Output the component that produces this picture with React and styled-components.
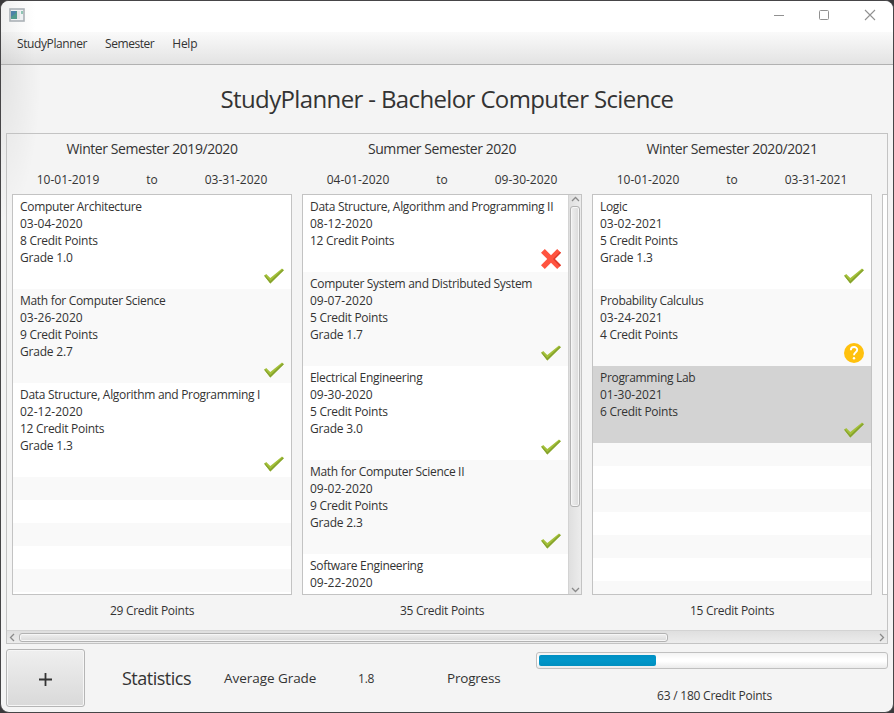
import React from "react";
import styled, { createGlobalStyle, css } from "styled-components";

const Global = createGlobalStyle`
  * { box-sizing: border-box; }
  html, body { margin: 0; padding: 0; }
  body { background: #3a393b; overflow: hidden; }
`;

const Window = styled.div`
  width: 894px;
  height: 713px;
  display: flex;
  flex-direction: column;
  background: radial-gradient(ellipse 40px 150px at 0 70px, rgba(0,0,0,.07), rgba(0,0,0,0)), #f4f4f4;
  border: 1px solid #464547;
  border-radius: 9px;
  overflow: hidden;
  font-family: "Open Sans", "Noto Sans", sans-serif;
  font-size: 12px;
  line-height: 17px;
  color: #333;
  white-space: nowrap;
`;

const TitleBar = styled.header`
  flex: none;
  height: 31px;
  display: flex;
  align-items: center;
  padding: 0 17px 3px 8px;
  background: linear-gradient(90deg, #f0f0f0, #fff 34px);
`;

const Controls = styled.div`
  margin-left: auto;
  display: flex;
  gap: 34px;
`;

const MenuBar = styled.nav`
  flex: none;
  height: 33px;
  display: flex;
  gap: 18px;
  padding: 3px 16px;
  background: linear-gradient(90deg, rgba(0,0,0,.06), rgba(0,0,0,0) 34px), linear-gradient(#fafafa, #e3e3e3);
  border-bottom: 1px solid #b1b1b1;
`;

const Text = styled.span`
  display: block;
  flex: none;
  letter-spacing: ${(p) => p.$ls || 0}px;
`;

const Title = styled.h1`
  flex: none;
  margin: 0;
  height: 68px;
  line-height: 68px;
  text-align: center;
  font-size: 24px;
  font-weight: 400;
  letter-spacing: -0.63px;
`;

const ScrollPane = styled.main`
  flex: none;
  width: 882px;
  height: 511px;
  margin-left: 5px;
  border: 1px solid #c3c3c3;
  display: flex;
  flex-direction: column;
`;

const Columns = styled.div`
  height: 496px;
  display: flex;
  gap: 10px;
  padding-left: 5px;
  overflow: hidden;
`;

const Column = styled.section`
  flex: none;
  width: 280px;
  display: flex;
  flex-direction: column;
`;

const ColumnTitle = styled.h2`
  margin: 0;
  height: 31px;
  line-height: 30px;
  font-size: 14px;
  font-weight: 400;
  text-align: center;
  letter-spacing: -0.43px;
`;

const Dates = styled.div`
  height: 29px;
  line-height: 29px;
  display: grid;
  grid-template-columns: 112px 56px 112px;
  text-align: center;
`;

const List = styled.div`
  height: 401px;
  display: flex;
  border: 1px solid #c3c3c3;
  background: #fff;
`;

const Rows = styled.div`
  flex: 1;
  overflow: hidden;
`;

const Row = styled.article`
  display: flex;
  flex-direction: column;
  padding: 3px 7px;
  background: ${(p) => (p.$selected ? "#d3d3d3" : p.$odd ? "#f9f9f9" : "#fff")};
`;

const EmptyRow = styled.div`
  height: 23px;
  background: ${(p) => (p.$odd ? "#f9f9f9" : "#fff")};
`;

const Status = styled.div`
  height: 20px;
  display: flex;
  justify-content: flex-end;
`;

const Total = styled.footer`
  height: 32px;
  line-height: 31px;
  text-align: center;
  letter-spacing: -0.28px;
`;

const VBar = styled.div`
  flex: none;
  width: 13px;
  display: flex;
  flex-direction: column;
  align-items: center;
  justify-content: space-between;
  padding: 0;
  border-left: 1px solid #d3d3d3;
  background: linear-gradient(90deg, #dfdfdf, #ececec);
`;

const HBar = styled.div`
  height: 13px;
  display: flex;
  align-items: center;
  justify-content: space-between;
  padding: 0 1px;
  border-top: 1px solid #d3d3d3;
  background: linear-gradient(#dfdfdf, #ececec);
`;

const Thumb = styled.div`
  border: 1px solid #b2b2b2;
  border-radius: 3px;
  box-shadow: inset 0 0 0 1px #f6f6f6;
  ${(p) =>
    p.$vertical
      ? css`
          width: 10px;
          height: 301px;
          margin: 2px 0 auto;
          background: linear-gradient(90deg, #efefef, #dadada);
        `
      : css`
          width: 649px;
          height: 9px;
          margin: 0 auto 0 2px;
          background: linear-gradient(#efefef, #dadada);
        `}
`;

const Bottom = styled.footer`
  flex: none;
  display: grid;
  grid-template-columns: 79px 37px 102px 134px 89px 89px 352px;
  margin: 5px 0 0 5px;
  height: 58px;
  align-items: center;
`;

const AddButton = styled.button`
  height: 58px;
  padding: 3px 0 0;
  border: 1px solid #b5b5b5;
  border-radius: 3px;
  box-shadow: inset 0 0 0 1px #f6f6f6;
  background: linear-gradient(#efefef, #d9d9d9);
  display: grid;
  place-items: center;
`;

const Heading = styled(Text)`
  font-size: 18px;
  line-height: 24px;
`;

const Stat = styled(Text)`
  font-size: 13.5px;
`;

const Progress = styled.div`
  align-self: stretch;
  display: flex;
  flex-direction: column;
  align-items: center;
  padding-top: 3px;
  gap: 18px;
`;

const ProgressLabel = styled(Text)`
  padding-left: 5px;
`;

const Track = styled.div`
  width: 352px;
  height: 17px;
  padding: 2px;
  border: 1px solid #c0c0c0;
  border-radius: 3px;
  background: linear-gradient(#f3f3f3, #fff 40%, #fff 55%, #ebebeb);
`;

const Fill = styled.div`
  height: 11px;
  border-radius: 2px;
  background: linear-gradient(#0090c4, #0096c9 50%, #008fbf);
`;

const AppIcon = () => (
  <svg width="16" height="14" viewBox="0 0 16 14">
    <rect x="1" y="1" width="14" height="12" fill="#eef1f3" stroke="#aab1b6" strokeWidth="1.6" />
    <rect x="2" y="3" width="6" height="8" fill="#4f9a8c" />
    <path d="M2 3h5v2l-5 4z" fill="#4a82a8" />
    <rect x="8" y="3" width="3" height="8" fill="#dfe2e4" />
    <rect x="12" y="3" width="2" height="3" fill="#8fc5b4" />
  </svg>
);

const Minimize = () => (
  <svg width="12" height="12" viewBox="0 0 12 12"><path d="M2 6.5h10" stroke="#919191" /></svg>
);
const Maximize = () => (
  <svg width="12" height="12" viewBox="0 0 12 12" fill="none"><rect x="1.5" y="1.5" width="9" height="9" rx="1" stroke="#919191" /></svg>
);
const Close = () => (
  <svg width="12" height="12" viewBox="0 0 12 12"><path d="M1 1l10 10M11 1L1 11" stroke="#919191" strokeWidth="1.1" /></svg>
);

const Check = () => (
  <svg width="20" height="20" viewBox="0 0 20 20">
    <path d="M.2 9.8L2.2 8L6.3 12L18 2.4L19.8 4.2L6.3 17.4z" fill="#a4c139" />
    <path d="M6.3 17.4L19.8 4.2L18.8 3.3L6.3 15L.9 9.2L.2 9.8z" fill="#86a32e" />
  </svg>
);
const Cross = () => (
  <svg width="20" height="20" viewBox="0 0 20 20">
    <path d="M3.8 0L10 6.2L16.2 0L20 3.8L13.8 10L20 16.2L16.2 20L10 13.8L3.8 20L0 16.2L6.2 10L0 3.8z" fill="#ff5440" />
    <path d="M20 3.8L13.8 10L20 16.2L18.8 17.4L12 10L19 2.8z" fill="#df3a2b" />
  </svg>
);
const Question = () => (
  <svg width="20" height="20" viewBox="0 0 20 20" fill="none">
    <circle cx="10" cy="10" r="10" fill="#ffc10e" />
    <path d="M6.8 7.2c0-4.2 6.4-4.2 6.4-.4 0 2.6-3.2 2.2-3.2 5.4" stroke="#fff" strokeWidth="1.9" />
    <circle cx="10" cy="15.2" r="1.2" fill="#fff" />
  </svg>
);
const icons = { ok: Check, fail: Cross, open: Question };

const paths = { left: "M6 1L2.5 4.5L6 8", right: "M3 1L6.5 4.5L3 8", up: "M1 6L4.5 2.5L8 6", down: "M1 3L4.5 6.5L8 3" };
const Arrow = ({ dir }) => (
  <svg width="9" height="9" viewBox="0 0 9 9" fill="none">
    <path d={paths[dir]} stroke="#8a8a8a" strokeWidth="1.3" />
  </svg>
);

const semesters = [
  {
    name: "Winter Semester 2019/2020", from: "10-01-2019", to: "03-31-2020", total: "29 Credit Points", empty: 5,
    modules: [
      ["ok", "Computer Architecture", "03-04-2020", "8 Credit Points", "Grade 1.0"],
      ["ok", "Math for Computer Science", "03-26-2020", "9 Credit Points", "Grade 2.7"],
      ["ok", "Data Structure, Algorithm and Programming I", "02-12-2020", "12 Credit Points", "Grade 1.3"],
    ],
  },
  {
    name: "Summer Semester 2020", from: "04-01-2020", to: "09-30-2020", total: "35 Credit Points", empty: 0, scroll: true,
    modules: [
      ["fail", "Data Structure, Algorithm and Programming II", "08-12-2020", "12 Credit Points"],
      ["ok", "Computer System and Distributed System", "09-07-2020", "5 Credit Points", "Grade 1.7"],
      ["ok", "Electrical Engineering", "09-30-2020", "5 Credit Points", "Grade 3.0"],
      ["ok", "Math for Computer Science II", "09-02-2020", "9 Credit Points", "Grade 2.3"],
      [null, "Software Engineering", "09-22-2020"],
    ],
  },
  {
    name: "Winter Semester 2020/2021", from: "10-01-2020", to: "03-31-2021", total: "15 Credit Points", empty: 7, selected: 2,
    modules: [
      ["ok", "Logic", "03-02-2021", "5 Credit Points", "Grade 1.3"],
      ["open", "Probability Calculus", "03-24-2021", "4 Credit Points"],
      ["ok", "Programming Lab", "01-30-2021", "6 Credit Points"],
    ],
  },
];

const Semester = ({ name, from, to, total, modules, empty, scroll, selected }) => (
  <Column>
    <ColumnTitle>{name}</ColumnTitle>
    <Dates><Text>{from}</Text><Text>to</Text><Text>{to}</Text></Dates>
    <List>
      <Rows>
        {modules.map(([status, ...lines], i) => {
          const Icon = icons[status];
          return (
            <Row key={i} $odd={i % 2 === 1} $selected={selected === i}>
              {lines.map((l, n) => <Text key={l} $ls={[-0.31, 0, -0.28, -0.2][n]}>{l}</Text>)}
              {Icon && <Status><Icon /></Status>}
            </Row>
          );
        })}
        {Array.from({ length: empty }, (_, i) => <EmptyRow key={i} $odd={(modules.length + i) % 2 === 1} />)}
      </Rows>
      {scroll && <VBar><Arrow dir="up" /><Thumb $vertical /><Arrow dir="down" /></VBar>}
    </List>
    <Total>{total}</Total>
  </Column>
);

export default function App() {
  return (
    <>
      <Global />
      <Window>
        <TitleBar>
          <AppIcon />
          <Controls><Minimize /><Maximize /><Close /></Controls>
        </TitleBar>
        <MenuBar>
          <Text $ls={-0.4}>StudyPlanner</Text>
          <Text $ls={-0.45}>Semester</Text>
          <Text $ls={-0.25}>Help</Text>
        </MenuBar>
        <Title>StudyPlanner - Bachelor Computer Science</Title>
        <ScrollPane>
          <Columns>
            {semesters.map((s) => <Semester key={s.name} {...s} />)}
            <Column><ColumnTitle /><Dates /><List /></Column>
          </Columns>
          <HBar><Arrow dir="left" /><Thumb /><Arrow dir="right" /></HBar>
        </ScrollPane>
        <Bottom>
          <AddButton aria-label="Add">
            <svg width="14" height="14" viewBox="0 0 14 14"><path d="M0 6.5h13M6.5 0v13" stroke="#333" strokeWidth="1.8" /></svg>
          </AddButton>
          <span />
          <Heading $ls={-0.5}>Statistics</Heading>
          <Stat $ls={-0.05}>Average Grade</Stat>
          <Text $ls={-0.2}>1.8</Text>
          <Stat $ls={-0.2}>Progress</Stat>
          <Progress>
            <Track><Fill style={{ width: `${(63 / 180) * 97}%` }} /></Track>
            <ProgressLabel $ls={-0.23}>63 / 180 Credit Points</ProgressLabel>
          </Progress>
        </Bottom>
      </Window>
    </>
  );
}
